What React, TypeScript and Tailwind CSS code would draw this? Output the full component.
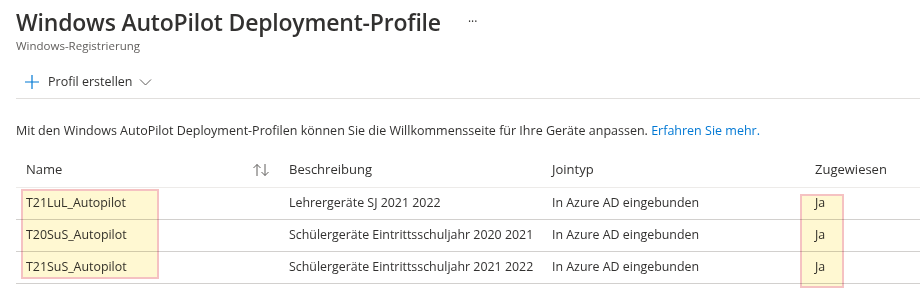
import React from "react";

const rows = [
  { name: "T21LuL_Autopilot", desc: "Lehrergeräte SJ 2021 2022", join: "In Azure AD eingebunden", assigned: "Ja" },
  { name: "T20SuS_Autopilot", desc: "Schülergeräte Eintrittsschuljahr 2020 2021", join: "In Azure AD eingebunden", assigned: "Ja" },
  { name: "T21SuS_Autopilot", desc: "Schülergeräte Eintrittsschuljahr 2021 2022", join: "In Azure AD eingebunden", assigned: "Ja" },
];

function PlusIcon() {
  return (
    <svg width="16" height="16" viewBox="0 0 16 16" fill="none">
      <path d="M8 1v14M1 8h14" stroke="#0078d4" strokeWidth="1.2" />
    </svg>
  );
}

function ChevronIcon() {
  return (
    <svg width="13" height="8" viewBox="0 0 13 8" fill="none">
      <path d="M1 1.5l5.5 5.5L12 1.5" stroke="#605e5c" strokeWidth="1" />
    </svg>
  );
}

function SortIcon() {
  return (
    <svg width="18" height="14" viewBox="0 0 18 14" fill="none">
      <path d="M5 13V1.5M1.5 5L5 1.5 8.5 5" stroke="#605e5c" strokeWidth="1" />
      <path d="M13 1v11.5M9.5 9l3.5 3.5L16.5 9" stroke="#605e5c" strokeWidth="1" />
    </svg>
  );
}

export default function App() {
  return (
    <div
      className="w-[920px] h-[307px] overflow-hidden bg-white text-[#323130]"
      style={{ fontFamily: '"Open Sans", "Noto Sans", sans-serif' }}
    >
      {/* ── Header ── */}
      <div className="pl-4 pt-2">
        <div className="flex items-center h-[28px]">
          <h1 className="text-[23px] leading-[28px] font-semibold tracking-[-0.2px] text-[#323130]">
            Windows AutoPilot Deployment-Profile
          </h1>
          <span className="ml-[27px] text-[12px] leading-none text-[#323130]">···</span>
        </div>
        <p className="mt-[2px] text-[11.5px] leading-[16px] text-[#605e5c]">Windows-Registrierung</p>
      </div>

      {/* ── Toolbar ── */}
      <div className="ml-4 mt-[12px] h-[33px] flex items-center gap-2 pl-2 border-b border-[#e1dfdd]">
        <PlusIcon />
        <span className="text-[12.5px] leading-none">Profil erstellen</span>
        <span className="-ml-px">
          <ChevronIcon />
        </span>
      </div>

      {/* ── Description ── */}
      <p className="ml-4 mt-[22px] text-[12.5px] leading-[20px]">
        Mit den Windows AutoPilot Deployment-Profilen können Sie die Willkommensseite für Ihre Geräte anpassen.{" "}
        <span className="text-[#0078d4]">Erfahren Sie mehr.</span>
      </p>

      {/* ── Table ── */}
      <div className="relative ml-4 mt-3">
        <div className="grid grid-cols-[263px_263px_263px_1fr] h-[35px] items-center border-b border-[#edebe9] text-[13px]">
          <div className="pl-[10px] pr-[9px] flex items-center justify-between">
            <span>Name</span>
            <SortIcon />
          </div>
          <div className="pl-[10px]">Beschreibung</div>
          <div className="pl-[10px]">Jointyp</div>
          <div className="pl-[10px]">Zugewiesen</div>
        </div>
        {rows.map((r) => (
          <div
            key={r.name}
            className="grid grid-cols-[263px_263px_263px_1fr] h-[32px] items-center border-b border-[#d2d0ce] text-[12.4px]"
          >
            <div className="pl-[10px]">{r.name}</div>
            <div className="pl-[10px]">{r.desc}</div>
            <div className="pl-[10px]">{r.join}</div>
            <div className="pl-[10px]">{r.assigned}</div>
          </div>
        ))}

        {/* highlight overlays */}
        <div className="pointer-events-none absolute left-[5px] top-[36px] w-[138px] h-[90px] border-2 border-[#f5c2c2] bg-[#fff8d2] mix-blend-multiply" />
        <div className="pointer-events-none absolute left-[784px] top-[41px] w-[44px] h-[94px] border-2 border-[#f5c2c2] bg-[#fff8d2] mix-blend-multiply" />
      </div>
    </div>
  );
}
